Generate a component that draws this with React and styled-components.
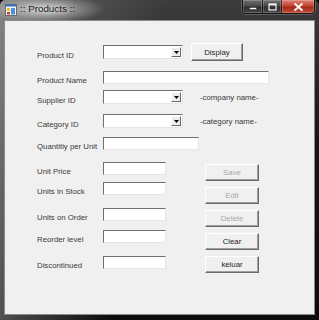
import React from "react";
import styled, { createGlobalStyle } from "styled-components";

const GlobalStyle = createGlobalStyle`
  html, body {
    margin: 0;
    padding: 0;
    background: #000;
  }
  body {
    font-family: "Liberation Sans", Arial, sans-serif;
  }
`;

const AppIcon = () => (
  <svg width="12" height="12" viewBox="0 0 12 12">
    <rect x="0.5" y="0.5" width="11" height="11" fill="#f4f4f4" stroke="#6a6a6a" />
    <rect x="0.5" y="0.5" width="11" height="2" fill="#3a6fc4" />
    <rect x="2" y="4" width="3" height="3" fill="#e8c020" />
    <rect x="2" y="8" width="3" height="2.5" fill="#d03a2a" />
    <rect x="6" y="4" width="4" height="6.5" fill="#4a8fe0" />
  </svg>
);

const MinGlyph = () => (
  <svg width="8" height="8" viewBox="0 0 8 8">
    <rect x="0.5" y="4.5" width="7" height="2" fill="#fff" stroke="#222" strokeWidth="0.5" />
  </svg>
);

const MaxGlyph = () => (
  <svg width="9" height="8" viewBox="0 0 9 8">
    <rect x="1" y="1" width="7" height="6" fill="none" stroke="#fff" strokeWidth="1.1" />
    <rect x="1" y="1" width="7" height="1.3" fill="#fff" />
  </svg>
);

const CloseGlyph = () => (
  <svg width="9" height="8" viewBox="0 0 9 8">
    <path d="M1.2 1 L7.8 7 M7.8 1 L1.2 7" stroke="#fff" strokeWidth="1.8" strokeLinecap="square" />
  </svg>
);

const ArrowGlyph = () => (
  <svg width="5" height="3" viewBox="0 0 5 3">
    <path d="M0 0 H5 L2.5 3 Z" fill="#000" />
  </svg>
);

const ComboBox = ({ width = 80 }) => (
  <Combo $w={width}>
    <DropButton>
      <ArrowGlyph />
    </DropButton>
  </Combo>
);

export default function App() {
  return (
    <>
      <GlobalStyle />
      <Window>
        <TitleBar>
          <IconSlot>
            <AppIcon />
          </IconSlot>
          <Title>:: Products ::</Title>
          <CaptionGroup>
            <CaptionButton $w={19}>
              <MinGlyph />
            </CaptionButton>
            <CaptionButton $w={19}>
              <MaxGlyph />
            </CaptionButton>
            <CaptionButton $w={33} $close>
              <CloseGlyph />
            </CaptionButton>
          </CaptionGroup>
        </TitleBar>
        <Client>
          <Form>
            <Row $mt={22} $h={18}>
              <Label>Product ID</Label>
              <ComboBox />
              <Button $w={52} $h={18} $ml={8}>
                Display
              </Button>
            </Row>
            <Row $mt={10} $h={13}>
              <Label>Product Name</Label>
              <TextBox $w={166} />
            </Row>
            <Row $mt={6} $h={14}>
              <Label>Supplier ID</Label>
              <ComboBox />
              <Hint>-company name-</Hint>
            </Row>
            <Row $mt={10} $h={14}>
              <Label>Category ID</Label>
              <ComboBox />
              <Hint>-category name-</Hint>
            </Row>
            <Row $mt={9} $h={13}>
              <Label>Quantitiy per Unit</Label>
              <TextBox $w={96} />
            </Row>
            <Split>
              <FieldColumn>
                <Row $mt={12} $h={13}>
                  <Label>Unit Price</Label>
                  <TextBox $w={63} />
                </Row>
                <Row $mt={7} $h={13}>
                  <Label>Units in Stock</Label>
                  <TextBox $w={63} />
                </Row>
                <Row $mt={13} $h={13}>
                  <Label>Units on Order</Label>
                  <TextBox $w={63} />
                </Row>
                <Row $mt={9} $h={13}>
                  <Label>Reorder level</Label>
                  <TextBox $w={63} />
                </Row>
                <Row $mt={13} $h={13}>
                  <Label>Discontinued</Label>
                  <TextBox $w={63} />
                </Row>
              </FieldColumn>
              <ButtonColumn>
                <Button $w={54} $h={17} disabled>
                  Save
                </Button>
                <Button $w={54} $h={17} disabled>
                  Edit
                </Button>
                <Button $w={54} $h={17} disabled>
                  Delete
                </Button>
                <Button $w={54} $h={17}>
                  Clear
                </Button>
                <Button $w={54} $h={17}>
                  keluar
                </Button>
              </ButtonColumn>
            </Split>
          </Form>
        </Client>
      </Window>
    </>
  );
}

const Window = styled.div`
  width: 319px;
  height: 320px;
  box-sizing: border-box;
  display: flex;
  flex-direction: column;
  background:
    radial-gradient(ellipse 60px 14px at 45px 9px, rgba(235, 235, 235, 0.75), rgba(235, 235, 235, 0) 100%),
    linear-gradient(100deg, rgba(140, 140, 140, 0.9) 0%, rgba(90, 90, 90, 0.7) 20%, rgba(20, 20, 20, 0) 45%),
    linear-gradient(180deg, #3c3c3c 0%, #151515 45%, #0c0c0c 100%);
  border-radius: 5px 5px 0 0;
  overflow: hidden;
`;

const TitleBar = styled.div`
  height: 20px;
  flex-shrink: 0;
  display: flex;
  align-items: flex-start;
`;

const IconSlot = styled.div`
  width: 12px;
  height: 12px;
  margin: 4px 0 0 5px;
  display: flex;
`;

const Title = styled.div`
  margin: 3px 0 0 3px;
  font-family: "Liberation Sans", Arial, sans-serif;
  font-size: 9.8px;
  line-height: 12px;
  color: #151515;
  text-shadow:
    0 0 4px rgba(255, 255, 255, 0.8),
    0 0 8px rgba(255, 255, 255, 0.6);
`;

const CaptionGroup = styled.div`
  margin-left: auto;
  margin-right: 4px;
  display: flex;
  border: 1px solid rgba(10, 10, 10, 0.8);
  border-top: none;
  border-radius: 0 0 4px 4px;
  overflow: hidden;
  box-shadow: 0 0 0 1px rgba(255, 255, 255, 0.2);
`;

const CaptionButton = styled.div`
  width: ${(p) => p.$w}px;
  height: 13px;
  display: flex;
  align-items: center;
  justify-content: center;
  box-sizing: border-box;
  border-left: 1px solid rgba(0, 0, 0, 0.6);
  &:first-child {
    border-left: none;
  }
  background: ${(p) =>
    p.$close
      ? "linear-gradient(180deg, #d98472 0%, #c4442f 45%, #a42a18 55%, #c0503a 100%)"
      : "linear-gradient(180deg, #6f6f6f 0%, #4a4a4a 45%, #303030 55%, #454545 100%)"};
  box-shadow: inset 0 0 0 1px rgba(255, 255, 255, 0.2);
`;

const Client = styled.div`
  flex: 1;
  margin: 0 4px 5px 4px;
  background: #f0f0f0;
  border: 1px solid #8a8a8a;
  box-sizing: border-box;
`;

const Form = styled.div`
  padding-left: 32px;
  display: flex;
  flex-direction: column;
`;

const Row = styled.div`
  display: flex;
  align-items: center;
  height: ${(p) => p.$h}px;
  margin-top: ${(p) => p.$mt}px;
`;

const Label = styled.div`
  width: 66px;
  flex-shrink: 0;
  padding-top: 6px;
  font-size: 7.8px;
  line-height: 9px;
  color: #3a3a3a;
  white-space: nowrap;
`;

const Hint = styled.div`
  margin-left: 17px;
  padding-top: 1px;
  font-size: 7.8px;
  line-height: 9px;
  color: #3a3a3a;
  white-space: nowrap;
`;

const TextBox = styled.div`
  width: ${(p) => p.$w}px;
  height: 13px;
  box-sizing: border-box;
  background: #fff;
  border: 1px solid;
  border-color: #707070 #e6e6e6 #e6e6e6 #707070;
`;

const Combo = styled.div`
  width: ${(p) => p.$w}px;
  height: 14px;
  box-sizing: border-box;
  background: #fff;
  border: 1px solid;
  border-color: #707070 #e6e6e6 #e6e6e6 #707070;
  display: flex;
  justify-content: flex-end;
  padding: 1px;
`;

const DropButton = styled.div`
  width: 10px;
  height: 100%;
  box-sizing: border-box;
  background: #ececec;
  border: 1px solid;
  border-color: #fff #6a6a6a #6a6a6a #fff;
  display: flex;
  align-items: center;
  justify-content: center;
`;

const Split = styled.div`
  display: flex;
  align-items: flex-start;
`;

const FieldColumn = styled.div`
  display: flex;
  flex-direction: column;
`;

const ButtonColumn = styled.div`
  display: flex;
  flex-direction: column;
  gap: 6px;
  margin-top: 14px;
  margin-left: 39px;
`;

const Button = styled.button`
  width: ${(p) => p.$w}px;
  height: ${(p) => p.$h}px;
  margin: 0 0 0 ${(p) => p.$ml || 0}px;
  padding: 0;
  box-sizing: border-box;
  background: #f0f0f0;
  border: 1px solid;
  border-color: #fff #6a6a6a #6a6a6a #fff;
  box-shadow: inset -1px -1px 0 #a0a0a0;
  font-family: "Liberation Sans", Arial, sans-serif;
  font-size: 7.8px;
  line-height: 9px;
  color: #1e1e1e;
  &:disabled {
    color: #a8a8a8;
  }
`;
